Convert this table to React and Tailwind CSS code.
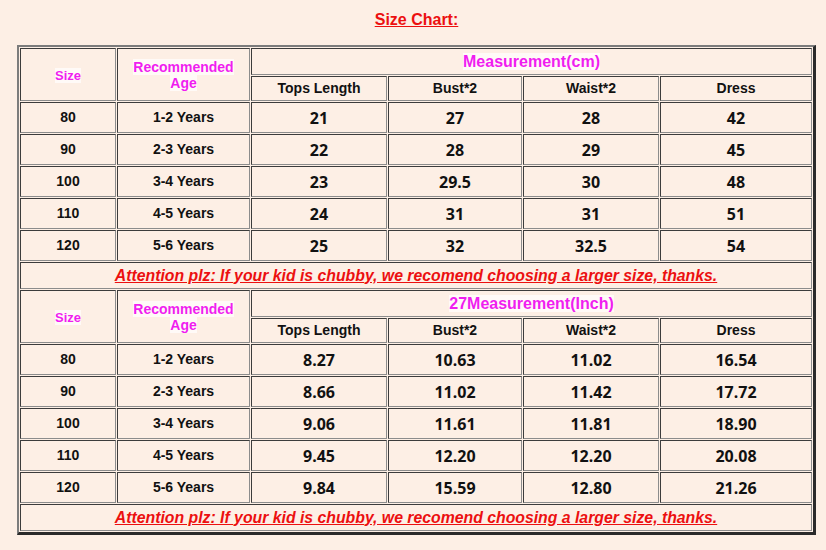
import React from "react";

const cmRows = [
  ["80", "1-2 Years", "21", "27", "28", "42"],
  ["90", "2-3 Years", "22", "28", "29", "45"],
  ["100", "3-4 Years", "23", "29.5", "30", "48"],
  ["110", "4-5 Years", "24", "31", "31", "51"],
  ["120", "5-6 Years", "25", "32", "32.5", "54"],
];

const inchRows = [
  ["80", "1-2 Years", "8.27", "10.63", "11.02", "16.54"],
  ["90", "2-3 Years", "8.66", "11.02", "11.42", "17.72"],
  ["100", "3-4 Years", "9.06", "11.61", "11.81", "18.90"],
  ["110", "4-5 Years", "9.45", "12.20", "12.20", "20.08"],
  ["120", "5-6 Years", "9.84", "15.59", "12.80", "21.26"],
];

const cell =
  "p-0 text-center align-middle border border-t-[#3c3c3c] border-l-[#3c3c3c] border-r-[#8c8c8c] border-b-[#8c8c8c]";

const Pink = ({ children, size = "text-[14px]" }) => (
  <span className={`bg-[#fffaf7] text-[#f01ef0] font-bold ${size}`}>{children}</span>
);

const Header = ({ title }) => (
  <>
    <tr className="h-[27px]">
      <td rowSpan={2} className={cell}>
        <Pink size="text-[13px]">Size</Pink>
      </td>
      <td rowSpan={2} className={`${cell} leading-[16px]`}>
        <Pink>Recommended</Pink>
        <br />
        <Pink>Age</Pink>
      </td>
      <td colSpan={4} className={cell}>
        <Pink size="text-[16px]">{title}</Pink>
      </td>
    </tr>
    <tr className="h-[25px] text-[14px] font-bold">
      <td className={cell}>Tops Length</td>
      <td className={cell}>Bust*2</td>
      <td className={cell}>Waist*2</td>
      <td className={cell}>Dress</td>
    </tr>
  </>
);

const Rows = ({ rows }) =>
  rows.map((r) => (
    <tr key={r[0]} className="h-[31px]">
      <td className={`${cell} text-[14px] font-bold`}>{r[0]}</td>
      <td className={`${cell} text-[14px] font-bold`}>{r[1]}</td>
      {r.slice(2).map((v, i) => (
        <td key={i} className={`${cell} font-['Noto_Sans',sans-serif] text-[16px] font-bold`}>
          {v}
        </td>
      ))}
    </tr>
  ));

const Attention = () => (
  <tr className="h-[27px]">
    <td colSpan={6} className={cell}>
      <span className="text-[#ec1010] text-[15.8px] font-bold italic underline">
        Attention plz: If your kid is chubby, we recomend choosing a larger size, thanks.
      </span>
    </td>
  </tr>
);

export default function App() {
  return (
    <div className="w-[826px] h-[550px] bg-[#fdefe5] font-['Liberation_Sans',Arial,sans-serif] text-[#111]">
      <div className="ml-[17px] w-[799px]">
        <div className="h-[45px] pt-[10px] text-center leading-[20px]">
          <span className="text-[#ec1010] text-[16px] font-bold underline">Size Chart:</span>
        </div>
        <table className="w-[799px] table-fixed border-separate border-spacing-[1px] border-t-2 border-l-2 border-r-[3px] border-b-[3px] border-t-[#7c7c7c] border-l-[#7c7c7c] border-r-[#2a2a2a] border-b-[#2a2a2a]">
          <colgroup>
            <col className="w-[96px]" />
            <col className="w-[133px]" />
            <col className="w-[136px]" />
            <col className="w-[134px]" />
            <col className="w-[136px]" />
            <col />
          </colgroup>
          <tbody>
            <Header title="Measurement(cm)" />
            <Rows rows={cmRows} />
            <Attention />
            <Header title="27Measurement(Inch)" />
            <Rows rows={inchRows} />
            <Attention />
          </tbody>
        </table>
      </div>
    </div>
  );
}
